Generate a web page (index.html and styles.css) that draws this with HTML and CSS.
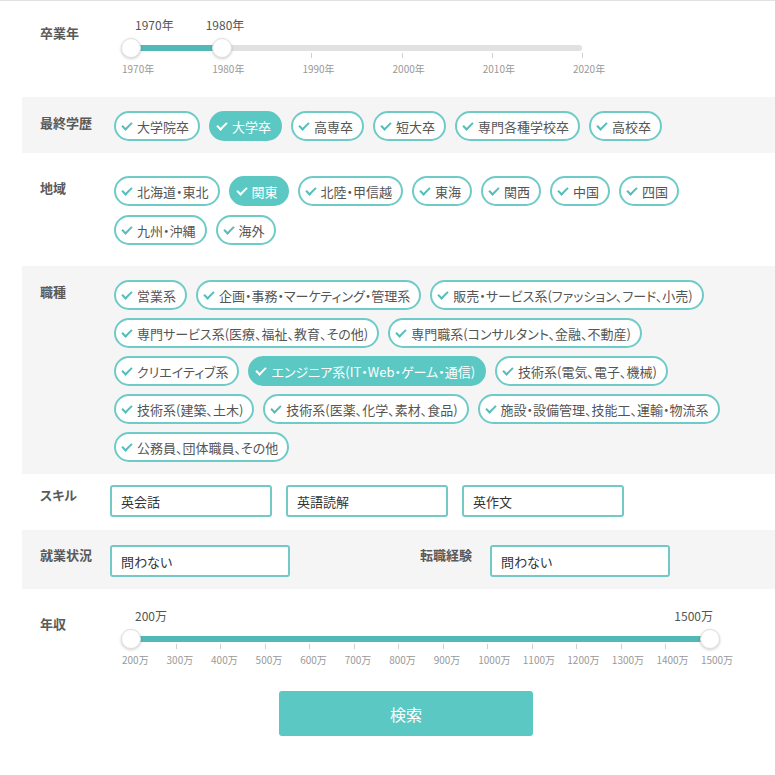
FILE: index.html
```html
<!DOCTYPE html>
<html lang="ja">
<head>
    <meta charset="UTF-8">
    <meta name="viewport" content="width=device-width, initial-scale=1.0">
    <title>求人検索</title>
    <link rel="stylesheet" href="styles.css">
</head>
<body>

    <form class="search">

        <!-- 卒業年 -->
        <div class="row row-slider row-first">
            <div class="row-label">卒業年</div>
            <div class="slider">
                <div class="slider-values">
                    <span class="slider-value start">1970年</span>
                    <span class="slider-value mid" style="left: 94px">1980年</span>
                </div>
                <div class="slider-track">
                    <div class="slider-fill" style="width: 20.2%"></div>
                    <span class="slider-thumb" style="left: 0%"></span>
                    <span class="slider-thumb" style="left: 20.2%"></span>
                </div>
                <div class="slider-scale">
                    <div class="tick"><span>1970年</span></div>
                    <div class="tick"><span>1980年</span></div>
                    <div class="tick"><span>1990年</span></div>
                    <div class="tick"><span>2000年</span></div>
                    <div class="tick"><span>2010年</span></div>
                    <div class="tick"><span>2020年</span></div>
                </div>
            </div>
        </div>

        <!-- 最終学歴 -->
        <div class="row alt">
            <div class="row-label">最終学歴</div>
            <div class="chips">
                <span class="chip">大学院卒</span>
                <span class="chip active">大学卒</span>
                <span class="chip">高専卒</span>
                <span class="chip">短大卒</span>
                <span class="chip">専門各種学校卒</span>
                <span class="chip">高校卒</span>
            </div>
        </div>

        <!-- 地域 -->
        <div class="row row-area">
            <div class="row-label">地域</div>
            <div class="chips">
                <span class="chip">北海道・東北</span>
                <span class="chip active">関東</span>
                <span class="chip">北陸・甲信越</span>
                <span class="chip">東海</span>
                <span class="chip">関西</span>
                <span class="chip">中国</span>
                <span class="chip">四国</span>
                <span class="chip">九州・沖縄</span>
                <span class="chip">海外</span>
            </div>
        </div>

        <!-- 職種 -->
        <div class="row alt">
            <div class="row-label">職種</div>
            <div class="chips">
                <span class="chip">営業系</span>
                <span class="chip">企画・事務・マーケティング・管理系</span>
                <span class="chip">販売・サービス系(ファッション、フード、小売)</span>
                <span class="chip">専門サービス系(医療、福祉、教育、その他)</span>
                <span class="chip">専門職系(コンサルタント、金融、不動産)</span>
                <span class="chip">クリエイティブ系</span>
                <span class="chip active">エンジニア系(IT・Web・ゲーム・通信)</span>
                <span class="chip">技術系(電気、電子、機械)</span>
                <span class="chip">技術系(建築、土木)</span>
                <span class="chip">技術系(医薬、化学、素材、食品)</span>
                <span class="chip">施設・設備管理、技能工、運輸・物流系</span>
                <span class="chip">公務員、団体職員、その他</span>
            </div>
        </div>

        <!-- スキル -->
        <div class="row row-input">
            <div class="row-label">スキル</div>
            <div class="inputs">
                <input type="text" class="text-input" value="英会話">
                <input type="text" class="text-input" value="英語読解">
                <input type="text" class="text-input" value="英作文">
            </div>
        </div>

        <!-- 就業状況 / 転職経験 -->
        <div class="row row-input row-status alt">
            <div class="row-label">就業状況</div>
            <div class="inputs">
                <input type="text" class="text-input wide" value="問わない">
                <div class="row-label inline-label">転職経験</div>
                <input type="text" class="text-input wide" value="問わない">
            </div>
        </div>

        <!-- 年収 -->
        <div class="row row-slider row-income">
            <div class="row-label">年収</div>
            <div class="slider wide">
                <div class="slider-values">
                    <span class="slider-value start">200万</span>
                    <span class="slider-value end">1500万</span>
                </div>
                <div class="slider-track">
                    <div class="slider-fill" style="width: 100%"></div>
                    <span class="slider-thumb" style="left: 0%"></span>
                    <span class="slider-thumb" style="left: 100%"></span>
                </div>
                <div class="slider-scale">
                    <div class="tick"><span>200万</span></div>
                    <div class="tick"><span>300万</span></div>
                    <div class="tick"><span>400万</span></div>
                    <div class="tick"><span>500万</span></div>
                    <div class="tick"><span>600万</span></div>
                    <div class="tick"><span>700万</span></div>
                    <div class="tick"><span>800万</span></div>
                    <div class="tick"><span>900万</span></div>
                    <div class="tick"><span>1000万</span></div>
                    <div class="tick"><span>1100万</span></div>
                    <div class="tick"><span>1200万</span></div>
                    <div class="tick"><span>1300万</span></div>
                    <div class="tick"><span>1400万</span></div>
                    <div class="tick"><span>1500万</span></div>
                </div>
            </div>
        </div>

        <div class="actions">
            <button type="submit" class="search-button">検索</button>
        </div>
    </form>

</body>
</html>
```

FILE: styles.css
```css
body {
    margin: 0;
    padding: 0;
    border-top: 1px solid #e2e2e2;
    background-color: #fff;
    font-family: "Noto Sans CJK JP", "Liberation Sans", sans-serif;
    font-feature-settings: "palt";
    color: #555;
}
.search {
    margin-left: 22px;
}

/* Rows */
.row {
    display: flex;
    padding: 14px 18px 12px;
}
.row.alt {
    background-color: #f5f5f5;
}
.row-label {
    width: 74px;
    flex-shrink: 0;
    padding-top: 2px;
    font-size: 13px;
    font-weight: bold;
    line-height: 20px;
    color: #5a5a5a;
}
.row-first {
    padding: 16px 18px 22px;
}
.row-income {
    padding: 19px 18px 13px;
}
.row-slider .row-label {
    padding-top: 6px;
}
.row-area {
    padding: 23px 18px 21px;
}
.row-area .chips {
    row-gap: 9px;
}

/* Chips */
.chips {
    display: flex;
    flex-wrap: wrap;
    gap: 8px 9px;
}
.chip {
    display: inline-flex;
    align-items: center;
    box-sizing: border-box;
    height: 30px;
    padding: 0 9px 0 5px;
    border: 2px solid #6fcbc7;
    border-radius: 15px;
    background-color: #fff;
    font-size: 13px;
    color: #555;
    white-space: nowrap;
}
.chip::before {
    content: "";
    width: 4px;
    height: 8px;
    margin: -3px 7px 0 3px;
    border: solid #56bdb8;
    border-width: 0 2.5px 2.5px 0;
    transform: rotate(45deg);
}
.chip.active {
    background-color: #5cc8c4;
    border-color: #5cc8c4;
    color: #fff;
}
.chip.active::before {
    border-color: #fff;
}

/* Text inputs */
.row-input {
    padding: 11px 18px 13px;
}
.row-input .row-label {
    padding-top: 0;
}
.row-status {
    padding: 15px 18px 12px;
}
.inputs {
    display: flex;
    align-items: flex-start;
    gap: 14px;
    margin-left: -4px;
}
.text-input {
    box-sizing: border-box;
    width: 162px;
    height: 32px;
    padding: 0 9px;
    border: 2px solid #72c9c5;
    border-radius: 3px;
    background-color: #fff;
    font: inherit;
    font-size: 13px;
    color: #333;
    outline: none;
}
.text-input.wide {
    width: 180px;
}
.inline-label {
    width: 56px;
    margin-left: 116px;
    padding-top: 0;
}

/* Range sliders */
.slider {
    width: 451px;
    margin-left: 17px;
}
.slider.wide {
    width: 579px;
}
.slider-values {
    position: relative;
    height: 16px;
    font-size: 12px;
    line-height: 16px;
    color: #555;
}
.slider-value {
    position: absolute;
    top: 0;
    white-space: nowrap;
}
.slider-value.start {
    left: 4px;
}
.slider-value.mid {
    transform: translateX(-50%);
}
.slider-value.end {
    right: -3px;
}
.slider-track {
    position: relative;
    height: 6px;
    margin-top: 12px;
    border-radius: 3px;
    background-color: #e1e1e1;
}
.slider-fill {
    height: 100%;
    background-color: #52b9b6;
}
.slider-thumb {
    position: absolute;
    top: 50%;
    box-sizing: border-box;
    width: 20px;
    height: 20px;
    margin: -10px 0 0 -10px;
    border: 1px solid #e0e0e0;
    border-radius: 50%;
    background-color: #fff;
    box-shadow: 0 1px 3px rgba(0, 0, 0, 0.2);
}
.slider-scale {
    display: flex;
    justify-content: space-between;
    margin-top: 2px;
}
.tick {
    width: 0;
    display: flex;
    flex-direction: column;
    align-items: flex-start;
}
.tick::before {
    content: "";
    width: 1px;
    height: 5px;
    background-color: #d0d0d0;
}
.tick span {
    margin: 5px 0 0 -9px;
    font-size: 10px;
    line-height: 12px;
    color: #999;
    white-space: nowrap;
}

/* Submit */
.actions {
    margin-top: 12px;
    padding-left: 15px;
    text-align: center;
}
.search-button {
    width: 254px;
    height: 45px;
    border: none;
    border-radius: 3px;
    background-color: #5bc8c4;
    font: inherit;
    font-size: 16px;
    color: #fff;
    cursor: pointer;
}
```
